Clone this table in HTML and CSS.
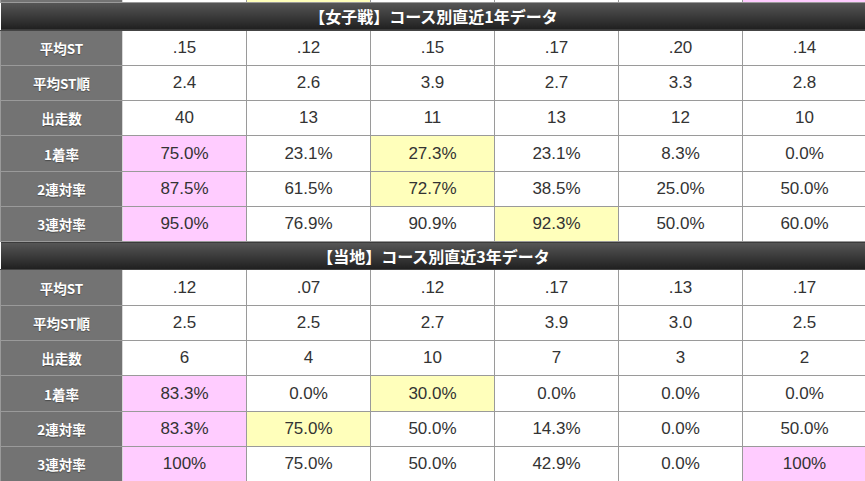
FILE: index.html
```html
<!DOCTYPE html>
<html lang="ja">
<head>
<meta charset="utf-8">
<link rel="stylesheet" href="styles.css">
</head>
<body>
<table class="stats">
  <colgroup>
    <col class="c-label"><col class="c-data"><col class="c-data"><col class="c-data"><col class="c-data"><col class="c-data"><col class="c-data">
  </colgroup>
  <tbody>
    <tr class="partial">
      <th class="label"></th><td></td><td class="hl-y"></td><td></td><td></td><td></td><td class="hl-p"></td>
    </tr>
    <tr class="head"><th colspan="7">【女子戦】コース別直近1年データ</th></tr>
    <tr><th class="label">平均ST</th><td>.15</td><td>.12</td><td>.15</td><td>.17</td><td>.20</td><td>.14</td></tr>
    <tr><th class="label">平均ST順</th><td>2.4</td><td>2.6</td><td>3.9</td><td>2.7</td><td>3.3</td><td>2.8</td></tr>
    <tr><th class="label">出走数</th><td>40</td><td>13</td><td>11</td><td>13</td><td>12</td><td>10</td></tr>
    <tr><th class="label">1着率</th><td class="hl-p">75.0%</td><td>23.1%</td><td class="hl-y">27.3%</td><td>23.1%</td><td>8.3%</td><td>0.0%</td></tr>
    <tr><th class="label">2連対率</th><td class="hl-p">87.5%</td><td>61.5%</td><td class="hl-y">72.7%</td><td>38.5%</td><td>25.0%</td><td>50.0%</td></tr>
    <tr><th class="label">3連対率</th><td class="hl-p">95.0%</td><td>76.9%</td><td>90.9%</td><td class="hl-y">92.3%</td><td>50.0%</td><td>60.0%</td></tr>
    <tr class="head"><th colspan="7">【当地】コース別直近3年データ</th></tr>
    <tr><th class="label">平均ST</th><td>.12</td><td>.07</td><td>.12</td><td>.17</td><td>.13</td><td>.17</td></tr>
    <tr><th class="label">平均ST順</th><td>2.5</td><td>2.5</td><td>2.7</td><td>3.9</td><td>3.0</td><td>2.5</td></tr>
    <tr><th class="label">出走数</th><td>6</td><td>4</td><td>10</td><td>7</td><td>3</td><td>2</td></tr>
    <tr><th class="label">1着率</th><td class="hl-p">83.3%</td><td>0.0%</td><td class="hl-y">30.0%</td><td>0.0%</td><td>0.0%</td><td>0.0%</td></tr>
    <tr><th class="label">2連対率</th><td class="hl-p">83.3%</td><td class="hl-y">75.0%</td><td>50.0%</td><td>14.3%</td><td>0.0%</td><td>50.0%</td></tr>
    <tr><th class="label">3連対率</th><td class="hl-p">100%</td><td>75.0%</td><td>50.0%</td><td>42.9%</td><td>0.0%</td><td class="hl-p">100%</td></tr>
  </tbody>
</table>
</body>
</html>
```

FILE: styles.css
```css
html, body {
  margin: 0;
  padding: 0;
  background: #fff;
  overflow: hidden;
}

.stats {
  width: 865px;
  border-collapse: collapse;
  table-layout: fixed;
  font-family: "Liberation Sans", Arial, "Noto Sans CJK JP", sans-serif;
}

.c-label { width: 122px; }
.c-data { width: 124px; }

.stats td,
.stats th {
  border: 1px solid #9a9a9a;
  padding: 0;
  text-align: center;
  vertical-align: middle;
}

.stats tr { height: 35.33px; }

.stats td {
  font-size: 17px;
  color: #333;
  background: #fff;
}

.stats th.label {
  background: #737373;
  color: #fff;
  font-family: "Noto Sans CJK JP", sans-serif;
  font-weight: bold;
  font-size: 13.5px;
  border-right-color: #d8d8d8;
  text-shadow: 0 1px 1px rgba(0,0,0,0.35);
}

.stats tr.partial { height: 2px; }
.stats tr.partial td,
.stats tr.partial th { height: 1px; border-top: none; }

.stats tr.head { height: 28px; }
.stats tr.head th {
  background: linear-gradient(#575757, #1f1f1f);
  color: #fff;
  font-family: "Noto Sans CJK JP", sans-serif;
  font-weight: bold;
  font-size: 16px;
  border-color: #444;
  border-left: none;
  border-right: none;
}

.stats td.hl-p { background: #ffccff; }
.stats td.hl-y { background: #ffffbb; }
```
